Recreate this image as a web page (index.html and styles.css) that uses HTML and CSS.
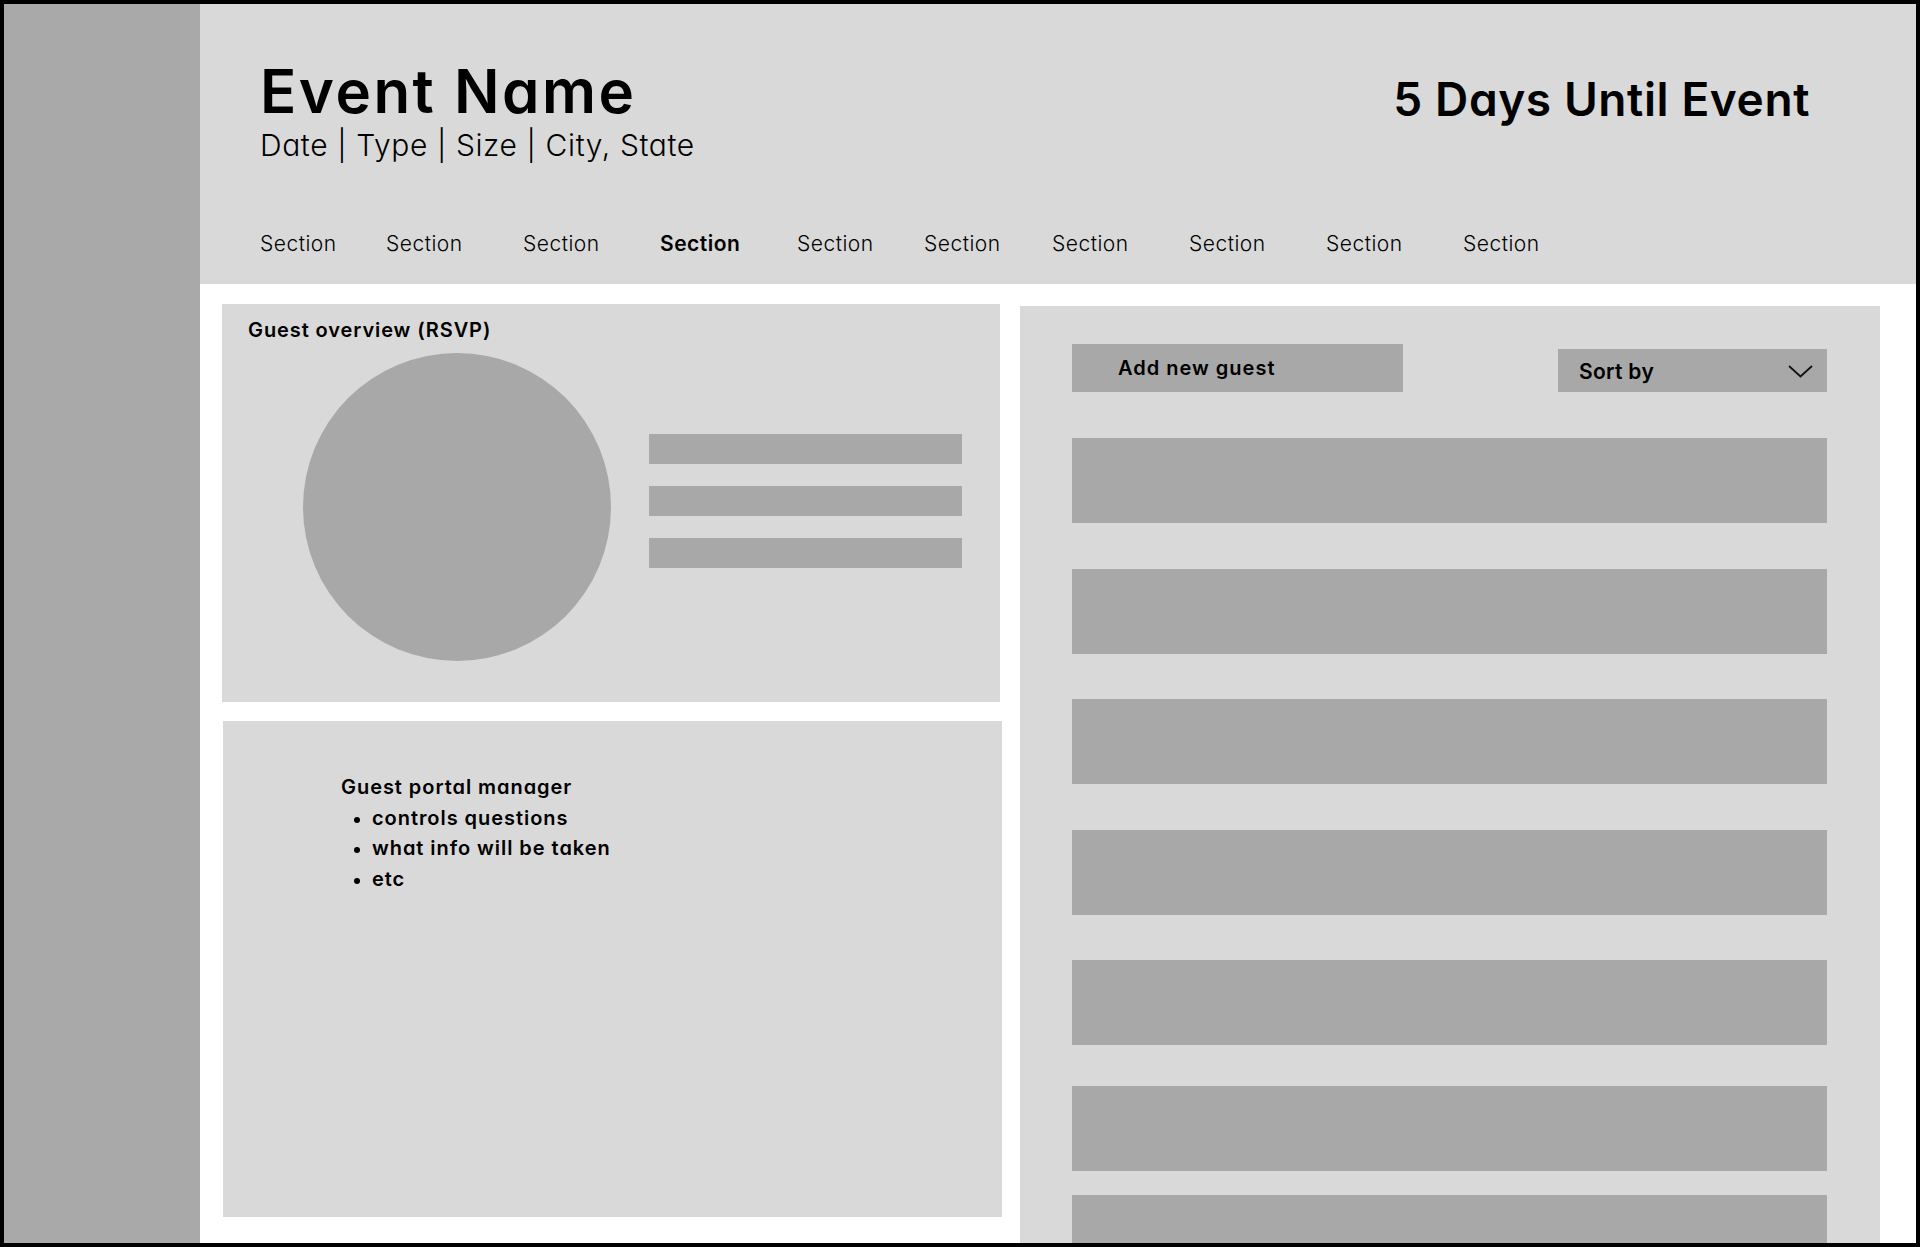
FILE: index.html
```html
<!DOCTYPE html>
<html lang="en">
<head>
<meta charset="utf-8">
<title>Event Dashboard</title>
<link rel="stylesheet" href="styles.css">
</head>
<body>
<div class="frame">
  <aside class="sidebar"></aside>
  <div class="main">
    <header class="header">
      <div class="header-top">
        <div class="title-block">
          <h1 class="event-name">Event Name</h1>
          <p class="event-meta">Date | Type | Size | City, State</p>
        </div>
        <div class="countdown">5 Days Until Event</div>
      </div>
      <nav class="nav">
        <span class="nav-item">Section</span>
        <span class="nav-item">Section</span>
        <span class="nav-item">Section</span>
        <span class="nav-item active">Section</span>
        <span class="nav-item">Section</span>
        <span class="nav-item">Section</span>
        <span class="nav-item">Section</span>
        <span class="nav-item">Section</span>
        <span class="nav-item">Section</span>
        <span class="nav-item">Section</span>
      </nav>
    </header>
    <section class="content">
      <div class="left-col">
        <div class="card overview">
          <h2 class="card-title">Guest overview (RSVP)</h2>
          <div class="overview-body">
            <div class="pie"></div>
            <div class="legend">
              <div class="legend-bar"></div>
              <div class="legend-bar"></div>
              <div class="legend-bar"></div>
            </div>
          </div>
        </div>
        <div class="card portal">
          <div class="portal-text">
            <p class="portal-title">Guest portal manager</p>
            <ul class="portal-list">
              <li>controls questions</li>
              <li>what info will be taken</li>
              <li>etc</li>
            </ul>
          </div>
        </div>
      </div>
      <div class="guest-panel">
        <div class="panel-head">
          <button class="add-btn">Add new guest</button>
          <div class="sort">
            <span>Sort by</span>
            <svg class="chev" width="25" height="13" viewBox="0 0 25 13"><polyline points="1,1 12.5,11.5 24,1" fill="none" stroke="#111" stroke-width="1.8"/></svg>
          </div>
        </div>
        <div class="guest-list">
          <div class="guest-row"></div>
          <div class="guest-row"></div>
          <div class="guest-row"></div>
          <div class="guest-row"></div>
          <div class="guest-row"></div>
          <div class="guest-row nudge-a"></div>
          <div class="guest-row nudge-b"></div>
        </div>
      </div>
    </section>
  </div>
</div>
</body>
</html>
```
FILE: styles.css
```css
* { box-sizing: border-box; }
html, body { margin: 0; padding: 0; }
body {
  font-family: Inter, "Open Sans", "Liberation Sans", sans-serif;
  font-feature-settings: "cv11" 1;
  color: #000;
  background: #000;
}
.frame {
  width: 1920px;
  height: 1247px;
  border: 4px solid #000;
  display: flex;
  overflow: hidden;
  background: #fff;
}
.sidebar {
  width: 196px;
  flex: none;
  background: #a9a9a9;
}
.main {
  flex: 1;
  display: flex;
  flex-direction: column;
  min-width: 0;
}
.header {
  height: 280px;
  flex: none;
  background: #d9d9d9;
  padding: 51px 106px 0 60px;
}
.header-top {
  display: flex;
  justify-content: space-between;
  align-items: flex-start;
}
.event-name {
  margin: 0;
  font-size: 60px;
  line-height: 72px;
  font-weight: 600;
  letter-spacing: 2.5px;
}
.event-meta {
  margin: 0;
  font-size: 30px;
  line-height: 36px;
  font-weight: 300;
  letter-spacing: 0.6px;
}
.countdown {
  margin-top: 16px;
  font-size: 46px;
  line-height: 56px;
  font-weight: 600;
  letter-spacing: 0.6px;
}
.nav {
  margin-top: 69px;
  display: grid;
  grid-template-columns: 126px 137px 137px 137px 127px 128px 137px 137px 137px auto;
  font-size: 21px;
  line-height: 24px;
  font-weight: 300;
  letter-spacing: 0.5px;
}
.nav-item.active { font-weight: 600; }

.content {
  flex: 1;
  display: flex;
  align-items: flex-start;
  padding-left: 22px;
  min-height: 0;
}
.left-col {
  width: 780px;
  flex: none;
  padding-top: 20px;
  display: flex;
  flex-direction: column;
  gap: 19px;
}
.card { background: #d9d9d9; }
.overview {
  width: 778px;
  height: 398px;
  padding: 14px 0 0 26px;
}
.card-title {
  margin: 0;
  font-size: 20px;
  line-height: 24px;
  font-weight: 600;
  letter-spacing: 0.9px;
}
.overview-body {
  display: flex;
  align-items: flex-start;
  margin-top: 11px;
  padding-left: 55px;
}
.pie {
  width: 308px;
  height: 308px;
  border-radius: 50%;
  background: #a8a8a8;
  flex: none;
}
.legend {
  margin: 81px 0 0 38px;
  display: flex;
  flex-direction: column;
  gap: 22px;
}
.legend-bar {
  width: 313px;
  height: 30px;
  background: #a8a8a8;
}
.portal {
  width: 779px;
  height: 496px;
  margin-left: 1px;
  padding: 51px 0 0 118px;
}
.portal-text {
  font-size: 20px;
  line-height: 30.5px;
  font-weight: 600;
  letter-spacing: 0.95px;
}
.portal-title { margin: 0; }
.portal-list {
  list-style: none;
  margin: 0;
  padding: 0;
}
.portal-list li {
  display: flex;
}
.portal-list li::before {
  content: "";
  width: 6px;
  height: 6px;
  border-radius: 50%;
  background: #000;
  margin: 14px 12px 0 13px;
  flex: none;
}

.guest-panel {
  width: 860px;
  flex: none;
  margin: 22px 0 0 18px;
  height: 1000px;
  background: #d9d9d9;
  padding: 38px 53px 0 52px;
}
.panel-head {
  display: flex;
  justify-content: space-between;
  align-items: flex-start;
}
.add-btn {
  width: 331px;
  height: 48px;
  border: 0;
  margin: 0;
  background: #a8a8a8;
  text-align: left;
  padding: 0 0 0 46px;
  font-family: inherit;
  font-feature-settings: inherit;
  font-size: 20px;
  line-height: 48px;
  font-weight: 600;
  letter-spacing: 1px;
  color: #000;
}
.sort {
  width: 269px;
  height: 43px;
  margin-top: 5px;
  background: #a8a8a8;
  display: flex;
  align-items: center;
  justify-content: space-between;
  padding: 1px 14px 0 21px;
  font-size: 21px;
  font-weight: 600;
  letter-spacing: 0.3px;
}
.chev { display: block; }
.guest-list {
  margin-top: 46px;
  display: flex;
  flex-direction: column;
  gap: 45.5px;
}
.guest-row {
  height: 85px;
  background: #a8a8a8;
  flex: none;
}
.guest-row.nudge-a { margin-top: -4.5px; }
.guest-row.nudge-b { margin-top: -21.5px; }
```
